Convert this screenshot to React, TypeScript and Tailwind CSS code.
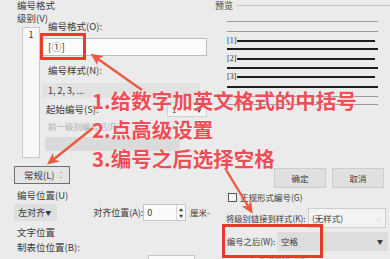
import React from 'react'

const FONT = "font-['Noto_Sans_CJK_SC',sans-serif]"

function PreviewRow({ n }: { n: number }) {
  return (
    <div className="flex items-center h-[10px]">
      <span className="font-['Liberation_Serif',serif] text-[8px] leading-[10px] text-[#333]">[{n}]</span>
      <div className="flex-1 h-[2px] bg-[#1e1e1e] ml-[1px] mr-[3px]" />
    </div>
  )
}

function Arrows() {
  return (
    <svg className="absolute inset-0 pointer-events-none" width="390" height="259" viewBox="0 0 390 259">
      <defs>
        <marker id="head" markerWidth="12" markerHeight="11" refX="3" refY="5.5" orient="auto" markerUnits="userSpaceOnUse">
          <path d="M0,0 L12,5.5 L0,11 L3,5.5 Z" fill="#ea5a40" />
        </marker>
      </defs>
      <line x1="142" y1="90" x2="98" y2="59" stroke="#ea5a40" strokeWidth="2.4" markerEnd="url(#head)" />
      <line x1="93" y1="128" x2="54" y2="159" stroke="#ea5a40" strokeWidth="2.4" markerEnd="url(#head)" />
      <line x1="225" y1="168" x2="248" y2="206" stroke="#ea5a40" strokeWidth="2.4" markerEnd="url(#head)" />
    </svg>
  )
}

export default function App() {
  return (
    <div className={`relative w-[390px] h-[259px] overflow-hidden bg-[#ebebeb] text-[#3a3a3a] ${FONT}`}>
      {/* top: 编号格式 + 预览 */}
      <div className="flex h-[160px]">
        <div className="w-[210px] shrink-0 pl-[17px]">
          <div className="h-[11px] text-[9.5px] leading-[11px]">编号格式</div>
          <div className="flex">
            <div className="w-[25px] shrink-0">
              <div className="h-[14px] leading-[14px] text-[9.5px] whitespace-nowrap">级别(V)</div>
              <div className="ml-[5px] mt-[2px] w-[18px] h-[131px] bg-[#f7f7f7] border border-[#c9c9c9] text-center text-[9px] leading-[12px] pt-[1px]">1</div>
            </div>
            <div className="w-[165px] shrink-0 pt-[10px]">
              <div className="h-[11px] leading-[11px] pl-[6px] text-[9.5px]">编号格式(O):</div>
              <div className="mt-[6px] h-[18px] bg-[#fbfbfb] border border-[#bdbdbd] pl-[5px] text-[10px] leading-[16px]">[①]</div>
              <div className="mt-[9px] h-[11px] leading-[11px] pl-[6px] text-[9.5px]">编号样式(N):</div>
              <div className="mt-[7px] h-[15px] w-[158px] bg-[#e2e2e2] pl-[6px] text-[9px] leading-[15px]">1, 2, 3, ...</div>
              <div className="mt-[3px] h-[17px] flex items-center justify-between">
                <span className="pl-[4px] text-[9.5px]">起始编号(S):</span>
                <div className="w-[40px] h-[15px] bg-[#f4f4f4] border border-[#d0d0d0] flex items-center justify-between px-[4px] text-[8px]">
                  <span>1</span>
                  <span className="text-[6px]">▼</span>
                </div>
              </div>
              <div className="mt-[1px] h-[14px] leading-[14px] pl-[6px] text-[8.5px] text-[#b0b0b0]">前一级别编号后(R)</div>
              <div className="mt-[4px] ml-[3px] w-[135px] h-[14px] bg-[#dadada]" />
            </div>
          </div>
        </div>
        <div className="flex-1 pl-[5px]">
          <div className="h-[11px] flex items-center">
            <span className="text-[9px] leading-[11px]">预览</span>
            <div className="flex-1 h-px bg-[#c4c4c4] ml-[3px]" />
          </div>
          <div className="ml-[12px] w-[151px]">
            <div className="mt-[10px] h-px bg-[#9a9a9a]" />
            <div className="mt-[9px] h-px bg-[#9a9a9a]" />
            <div className="mt-[4px]"><PreviewRow n={1} /></div>
            <div className="mt-[2px] h-[2px] bg-[#1e1e1e]" />
            <div className="mt-[4px]"><PreviewRow n={2} /></div>
            <div className="mt-[3px] h-[2px] bg-[#1e1e1e]" />
            <div className="mt-[3px]"><PreviewRow n={3} /></div>
            <div className="mt-[4px] h-[2px] bg-[#1e1e1e]" />
            <div className="mt-[8px] h-px bg-[#9a9a9a]" />
            <div className="mt-[7px] h-px bg-[#9a9a9a]" />
          </div>
        </div>
      </div>

      {/* bottom */}
      <div className="flex h-[99px]">
        <div className="w-[210px] shrink-0 pl-[14px]">
          <div className="mt-[6px] w-[56px] h-[18px] border border-[#6f6f6f] bg-[#e4e4e4] flex items-center pl-[9px] gap-[5px] text-[9.5px]">
            <span>常规(L)</span>
            <span className="text-[8px]">⁚</span>
          </div>
          <div className="mt-[5px] pl-[3px] h-[12px] leading-[12px] text-[9.5px]">编号位置(U)</div>
          <div className="mt-[3px] h-[17px] flex items-center">
            <div className="w-[47px] h-[17px] bg-[#dfdfdf] flex items-center justify-between pl-[4px] pr-[6px] text-[9px]">
              <span>左对齐</span>
              <span className="text-[6px]">▼</span>
            </div>
            <span className="ml-[36px] w-[50px] text-[9px] whitespace-nowrap">对齐位置(A):</span>
            <div className="w-[47px] h-[17px] bg-[#fafafa] border border-[#c6c6c6] flex items-center justify-between pl-[3px] text-[9px]">
              <span>0</span>
              <div className="w-[9px] h-full border-l border-[#d4d4d4] flex flex-col items-center justify-center text-[4px] leading-[6px]">
                <span>▲</span>
                <span>▼</span>
              </div>
            </div>
            <span className="ml-[4px] text-[8.5px] whitespace-nowrap">厘米-</span>
          </div>
          <div className="mt-[5px] pl-[3px] h-[12px] leading-[12px] text-[9.5px]">文字位置</div>
          <div className="mt-[3px] pl-[3px] h-[12px] leading-[12px] text-[9.5px]">制表位位置(B):</div>
          <div className="mt-[2px] ml-[134px] w-[47px] h-[14px] bg-[#fafafa] border border-[#c6c6c6]" />
        </div>
        <div className="flex-1">
          <div className="mt-[8px] flex justify-end pr-[6px] gap-[6px]">
            <div className="w-[52px] h-[20px] bg-[#e0e0e0] border border-[#cdcdcd] flex items-center justify-center text-[8.5px]">确定</div>
            <div className="w-[52px] h-[20px] bg-[#e0e0e0] border border-[#cdcdcd] flex items-center justify-center text-[8.5px]">取消</div>
          </div>
          <div className="mt-[4px] pl-[18px] h-[10px] flex items-center">
            <div className="w-[9px] h-[9px] border border-[#555] bg-[#f7f7f7]" />
            <span className="ml-[3px] text-[8.5px] leading-[10px]">正规形式编号(G)</span>
          </div>
          <div className="mt-[6px] pl-[16px] h-[20px] flex items-center">
            <span className="w-[82px] shrink-0 text-[8.3px] whitespace-nowrap">将级别链接到样式(K):</span>
            <div className="flex-1 mr-[4px] h-[20px] bg-[#f3f3f3] border border-[#cdcdcd] flex items-center justify-between pl-[3px] pr-[4px] text-[8.5px]">
              <span>(无样式)</span>
              <span className="text-[7px] text-[#777]">⌵</span>
            </div>
          </div>
          <div className="mt-[4px] pl-[17px] h-[19px] flex items-center">
            <span className="w-[50px] shrink-0 text-[8.3px] whitespace-nowrap">编号之后(W):</span>
            <div className="flex-1 mr-[2px] h-[19px] bg-[#dddddd] flex items-center justify-between pl-[4px] pr-[5px] text-[8.5px]">
              <span>空格</span>
              <span className="text-[6px]">▼</span>
            </div>
          </div>
          <div className="mt-[3px] pl-[40px] text-[8px] leading-[10px] text-[#9a9a9a] whitespace-nowrap">设置所有级别(E)...</div>
        </div>
      </div>

      {/* annotations */}
      <div className="absolute left-[40px] top-[33px] w-[46px] h-[27px] border-[3px] border-[#e8392b]" />
      <div className="absolute left-[222px] top-[224px] w-[101px] h-[34px] border-[3px] border-[#e8392b]" />
      <Arrows />
      <div className="absolute left-[92px] top-[86px] text-[20.5px] leading-[29px] font-bold text-[#ef4d57] whitespace-nowrap [text-shadow:0_0_2px_#ffffff]">
        <div>1.给数字加英文格式的中括号</div>
        <div>2.点高级设置</div>
        <div>3.编号之后选择空格</div>
      </div>
    </div>
  )
}
